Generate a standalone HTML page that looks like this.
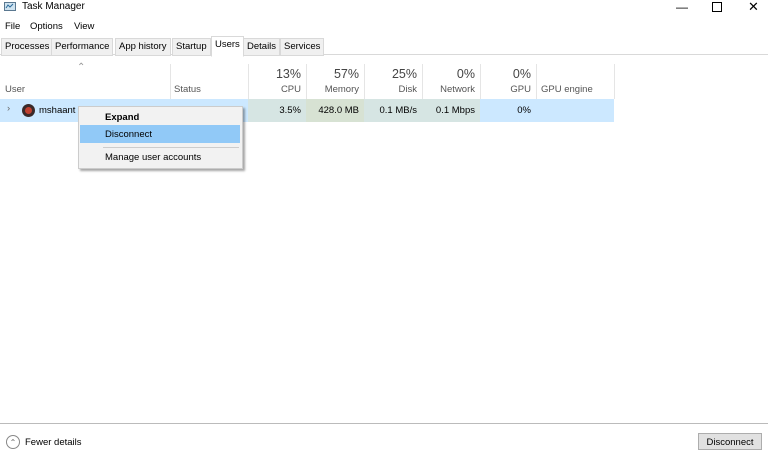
<!DOCTYPE html><html><head><style>
body{margin:0;width:768px;height:457px;background:#fff;font-family:"Liberation Sans",sans-serif;font-size:9.5px;color:#000;position:relative;overflow:hidden}
.a{position:absolute;white-space:nowrap}
.tab{position:absolute;top:38px;height:16px;line-height:16px;background:#f0f0f0;border:1px solid #d9d9d9;padding:0 3px;font-size:9.5px}
.vl{position:absolute;top:64px;height:35px;width:1px;background:#e5e5e5}
.h{position:absolute;text-align:right;color:#444}
.big{font-size:12.5px;top:67px}
.sm{top:84px;font-size:9.5px;color:#555}
</style></head><body>
<svg class="a" style="left:4px;top:1px" width="12" height="11"><rect x="0.5" y="1.5" width="11" height="8" fill="#cfe3f0" stroke="#5a7890"/><polyline points="2,7 4,4 6,6 9,3" fill="none" stroke="#2a6a9a"/></svg>
<div class="a" style="left:22px;top:1px;font-size:10px">Task Manager</div>
<div class="a" style="left:676px;top:0;font-size:12px">&#8212;</div>
<div class="a" style="left:712px;top:0px;width:8px;height:8px;border:1px solid #000;top:2px"></div>
<div class="a" style="left:748px;top:-1px;font-size:13px">&#10005;</div>
<div class="a" style="left:5px;top:21px">File</div>
<div class="a" style="left:30px;top:21px">Options</div>
<div class="a" style="left:74px;top:21px">View</div>
<div class="a" style="left:0;top:54px;width:768px;height:1px;background:#d9d9d9"></div>
<div class="tab" style="left:1px">Processes</div>
<div class="tab" style="left:51px">Performance</div>
<div class="tab" style="left:115px">App history</div>
<div class="tab" style="left:172px">Startup</div>
<div class="tab" style="left:211px;top:36px;height:19px;background:#fff;border-bottom-color:#fff">Users</div>
<div class="tab" style="left:243px">Details</div>
<div class="tab" style="left:280px">Services</div>
<div class="a" style="left:77px;top:62px;color:#999;font-size:10px">&#8963;</div>
<div class="a" style="left:5px;top:84px;color:#555">User</div>
<div class="a" style="left:174px;top:84px;color:#555">Status</div>
<div class="vl" style="left:170px"></div><div class="vl" style="left:248px"></div><div class="vl" style="left:306px"></div><div class="vl" style="left:364px"></div><div class="vl" style="left:422px"></div><div class="vl" style="left:480px"></div><div class="vl" style="left:536px"></div><div class="vl" style="left:614px"></div>
<div class="h big" style="left:248px;width:53px">13%</div><div class="h sm" style="left:248px;width:53px">CPU</div>
<div class="h big" style="left:306px;width:53px">57%</div><div class="h sm" style="left:306px;width:53px">Memory</div>
<div class="h big" style="left:364px;width:53px">25%</div><div class="h sm" style="left:364px;width:53px">Disk</div>
<div class="h big" style="left:422px;width:53px">0%</div><div class="h sm" style="left:422px;width:53px">Network</div>
<div class="h big" style="left:480px;width:51px">0%</div><div class="h sm" style="left:480px;width:51px">GPU</div>
<div class="a sm" style="left:541px;color:#555">GPU engine</div>
<div class="a" style="left:0;top:99px;width:614px;height:23px;background:#cce8ff"></div>
<div class="a" style="left:248px;top:99px;width:58px;height:23px;background:#d6e5e3"></div>
<div class="a" style="left:306px;top:99px;width:58px;height:23px;background:#d7e2d3"></div>
<div class="a" style="left:364px;top:99px;width:116px;height:23px;background:#d6e5e3"></div>
<div class="a" style="left:7px;top:103px;color:#666">&#8250;</div>
<div class="a" style="left:22px;top:104px;width:13px;height:13px;border-radius:50%;background:#3a2a2a"><div style="margin:3px;width:7px;height:7px;border-radius:50%;background:#c04030"></div></div>
<div class="a" style="left:39px;top:105px">mshaant</div>
<div class="h" style="left:248px;width:53px;top:105px;color:#000">3.5%</div>
<div class="h" style="left:306px;width:53px;top:105px;color:#000">428.0 MB</div>
<div class="h" style="left:364px;width:53px;top:105px;color:#000">0.1 MB/s</div>
<div class="h" style="left:422px;width:53px;top:105px;color:#000">0.1 Mbps</div>
<div class="h" style="left:480px;width:51px;top:105px;color:#000">0%</div>
<div class="a" style="left:78px;top:106px;width:163px;height:61px;background:#f2f2f2;border:1px solid #ccc;box-shadow:2px 2px 2px rgba(0,0,0,.35)">
<div class="a" style="left:26px;top:5px;font-weight:bold">Expand</div>
<div class="a" style="left:1px;top:18px;width:160px;height:18px;background:#91c9f7"></div>
<div class="a" style="left:26px;top:22px">Disconnect</div>
<div class="a" style="left:24px;top:40px;width:136px;height:1px;background:#ccc"></div>
<div class="a" style="left:26px;top:45px">Manage user accounts</div>
</div>
<div class="a" style="left:0;top:423px;width:768px;height:1px;background:#bbb"></div>
<div class="a" style="left:6px;top:435px;width:12px;height:12px;border:1px solid #888;border-radius:50%;font-size:8px;text-align:center;line-height:13px;color:#666">&#8963;</div>
<div class="a" style="left:25px;top:437px">Fewer details</div>
<div class="a" style="left:698px;top:433px;width:64px;height:17px;background:#e1e1e1;border:1px solid #adadad;text-align:center;line-height:17px;box-sizing:border-box">Disconnect</div>
</body></html>
